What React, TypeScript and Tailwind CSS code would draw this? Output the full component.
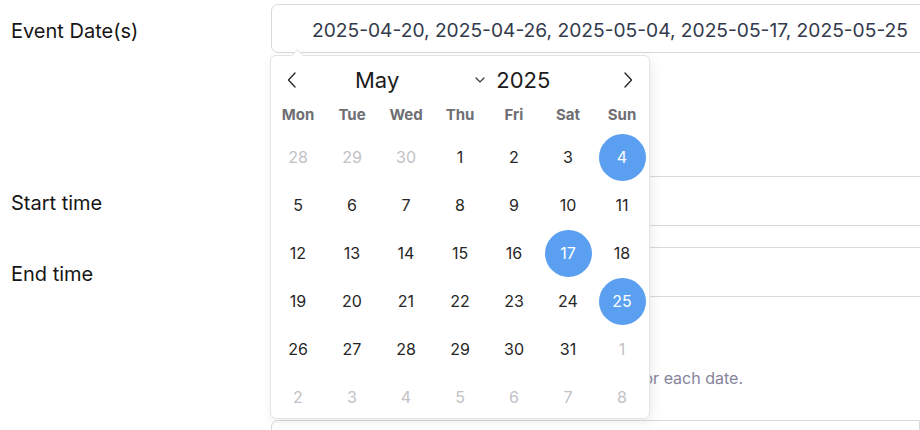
import React from 'react';

type Day = { n: number; muted?: boolean; selected?: boolean };

const weekdays = ['Mon', 'Tue', 'Wed', 'Thu', 'Fri', 'Sat', 'Sun'];

const selectedDays = [4, 17, 25];

function buildWeeks(): Day[][] {
  const cells: Day[] = [];
  [28, 29, 30].forEach((n) => cells.push({ n, muted: true }));
  for (let n = 1; n <= 31; n++) cells.push({ n, selected: selectedDays.includes(n) });
  for (let n = 1; n <= 8; n++) cells.push({ n, muted: true });
  const weeks: Day[][] = [];
  for (let i = 0; i < cells.length; i += 7) weeks.push(cells.slice(i, i + 7));
  return weeks;
}

function Chevron({ dir }: { dir: 'left' | 'right' }) {
  return (
    <svg width="10" height="16" viewBox="0 0 10 16" fill="none" stroke="#2a2a2a" strokeWidth="1.4" strokeLinecap="round" strokeLinejoin="round">
      {dir === 'left' ? <polyline points="8,1 1.5,8 8,15" /> : <polyline points="2,1 8.5,8 2,15" />}
    </svg>
  );
}

function Calendar() {
  const weeks = buildWeeks();
  return (
    <div className="absolute left-[270px] top-[55px] w-[380px] h-[364px] bg-white border border-[#e3e3e8] rounded-[6px] shadow-[2px_3px_12px_rgba(0,0,0,0.08)]">
      {/* little pointer */}
      <div className="absolute -top-[5px] left-[22px] w-[9px] h-[9px] rotate-45 bg-white border-l border-t border-[#e3e3e8]" />
      <div className="relative h-[364px] overflow-hidden rounded-[6px]">
        <div className="flex items-center h-[48px] pl-[16px] pr-[16px]">
          <Chevron dir="left" />
          <span className="ml-[58px] text-[22px] text-[#1c1c1c] leading-none">May</span>
          <svg className="ml-[76px]" width="10" height="6" viewBox="0 0 10 6" fill="none" stroke="#333" strokeWidth="1.2" strokeLinecap="round">
            <polyline points="1,1 5,5 9,1" />
          </svg>
          <span className="ml-[11px] text-[22px] text-[#1c1c1c] leading-none">2025</span>
          <span className="ml-auto">
            <Chevron dir="right" />
          </span>
        </div>
        <div className="grid grid-cols-7 h-[20px] items-center">
          {weekdays.map((w) => (
            <div key={w} className="text-center text-[15px] font-bold text-[#6e6e73]">
              {w}
            </div>
          ))}
        </div>
        <div className="mt-[9px]">
          {weeks.map((week, wi) => (
            <div key={wi} className="grid grid-cols-7 h-[48px]">
              {week.map((d, di) => (
                <div key={di} className="flex items-center justify-center">
                  {d.selected ? (
                    <span className="flex items-center justify-center w-[47px] h-[47px] rounded-full bg-[#5b9ff1] text-white text-[16px]">
                      {d.n}
                    </span>
                  ) : (
                    <span className={d.muted ? 'text-[16px] text-[#c2c2c6]' : 'text-[16px] text-[#262626]'}>{d.n}</span>
                  )}
                </div>
              ))}
            </div>
          ))}
        </div>
      </div>
    </div>
  );
}

function Field({ label, h, children }: { label?: string; h: string; children?: React.ReactNode }) {
  return (
    <div className={`flex items-center ${h}`}>
      <div className="w-[271px] pl-[11px] pt-[4px] text-[20px] text-[#161616] shrink-0">{label}</div>
      <div className="flex-1 h-full">{children}</div>
    </div>
  );
}

export default function App() {
  return (
    <div className="relative w-[920px] h-[430px] overflow-hidden bg-white" style={{ fontFamily: 'Inter, "Noto Sans", sans-serif' }}>
      <div className="flex flex-col pt-[4px]">
        <Field label="Event Date(s)" h="h-[49px]">
          <div className="w-[700px] h-full border border-[#d8d8de] rounded-l-[7px] flex items-center pl-[40px] pt-[3px] text-[19.2px] text-[#333a4c] whitespace-nowrap">
            2025-04-20, 2025-04-26, 2025-05-04, 2025-05-17, 2025-05-25
          </div>
        </Field>
        <div className="h-[123px]" />
        <Field label="Start time" h="h-[50px]">
          <div className="w-[700px] h-full border border-[#d8d8de] rounded-l-[7px]" />
        </Field>
        <div className="h-[21px]" />
        <Field label="End time" h="h-[50px]">
          <div className="w-[700px] h-full border border-[#d8d8de] rounded-l-[7px]" />
        </Field>
        <div className="h-[69px]" />
        <div className="flex">
          <div className="w-[271px] shrink-0" />
          <div className="w-[472px] text-right text-[16px] leading-[24px] text-[#85859a] whitespace-nowrap">
            Use the same start and end times for each date.
          </div>
        </div>
        <div className="h-[30px]" />
        <div className="flex">
          <div className="w-[271px] shrink-0" />
          <div className="w-[700px] h-[40px] border border-[#d8d8de] rounded-l-[7px]" />
        </div>
      </div>
      <Calendar />
    </div>
  );
}
